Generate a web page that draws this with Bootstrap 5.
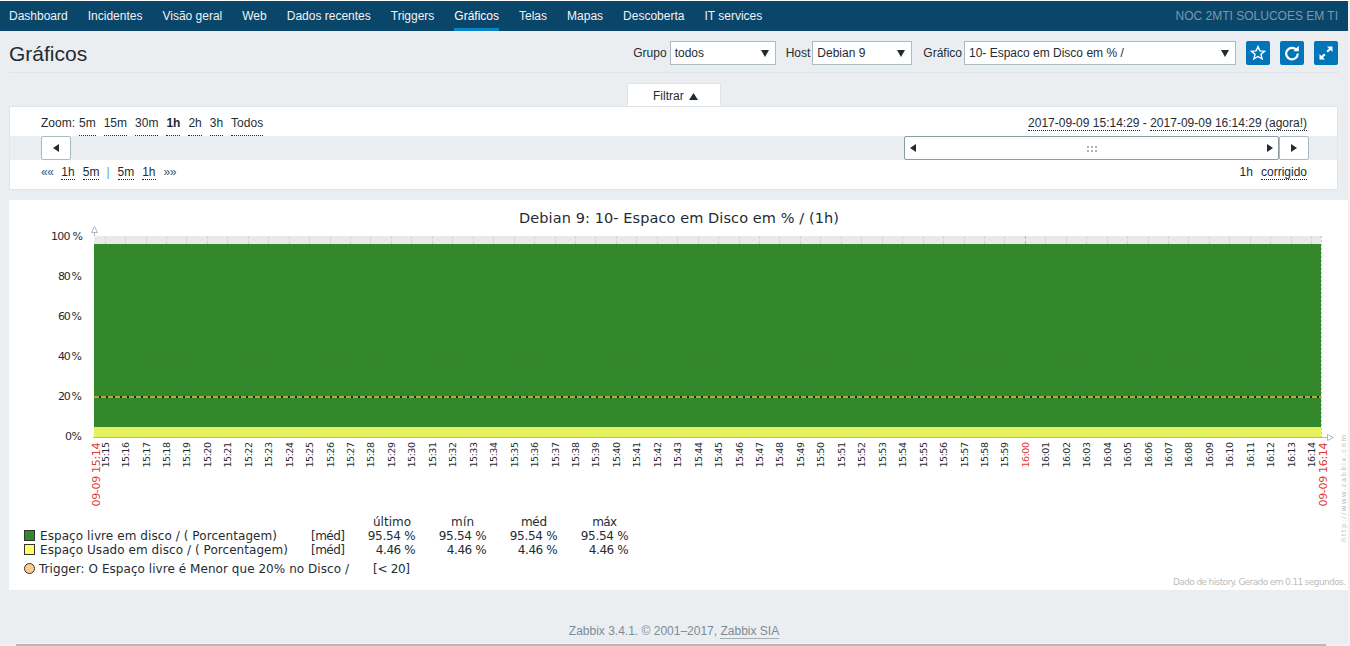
<!DOCTYPE html>
<html lang="pt">
<head>
    <meta charset="UTF-8">
    <title>Gráficos</title>
    <link href="https://cdn.jsdelivr.net/npm/bootstrap@5.3.0/dist/css/bootstrap.min.css" rel="stylesheet">
    <style>
        html, body { height: 646px; overflow: hidden; }
        body { background: #ebeef0; color: #1f2c33; font-family: "Liberation Sans", Arial, sans-serif; font-size: 12px; line-height: 14px; }
        .top-bar { background: #0a466a; height: 31px; border-top: 1px solid #fff; padding-right: 12px; }
        .top-bar .nav-links { padding-left: 9px; gap: 20px; }
        .top-bar a { display: block; color: #f2f2f2; text-decoration: none; padding-top: 8px; height: 30px; }
        .top-bar a.sel { color: #fff; border-bottom: 3px solid #0a84c8; }
        .org-name { color: #7e98a8; padding-top: 8px; }
        .page-head { margin: 0 12px 0 9px; height: 42px; padding-top: 3px; border-bottom: 1px solid #e0e4e7; }
        .page-head h1 { font-size: 21px; line-height: 24px; margin: 2px 0 0; font-weight: 400; font-family: "Liberation Sans", Arial, sans-serif; color: #1f2c33; }
        .pick { height: 24px; font-size: 12px; line-height: 14px; padding: 0 20px 0 4px; border-radius: 0; border: 1px solid #acbbc2; color: #1f2c33; background-size: 16px 12px; background-position: right 2px center; background-image: url("data:image/svg+xml,%3csvg xmlns='http://www.w3.org/2000/svg' viewBox='0 0 16 12'%3e%3cpath fill='%231f2c33' d='M4 3h8l-4 7z'/%3e%3c/svg%3e"); }
        .pick-group { width: 106px; margin: 0 10px 0 3px; }
        .pick-host { width: 100px; margin: 0 11px 0 2px; }
        .pick-graph { width: 272px; margin: 0 10px 0 2px; }
        .btn-row { gap: 10px; }
        .blue-btn { width: 24px; height: 24px; background: #0275b8; border-radius: 2px; border: 0; padding: 0; display: flex; align-items: center; justify-content: center; }
        .filter-tab { width: 94px; height: 23px; background: #fff; margin: 10px 0 0 627px; text-align: center; padding: 5px 0 0 3px; border: 1px solid #e0e4e7; border-bottom: 0; }
        .tab-arrow { margin-left: 2px; }
        .panel-box { background: #fff; border: 1px solid #e0e4e7; margin: 0 12px 0 9px; }
        .filter-box { height: 84px; }
        .zoom-row { height: 29px; padding: 9px 30px 0 31px; }
        .zoom-word { margin-right: -4px; }
        .dot-link { color: #1f2c33; text-decoration: none; border-bottom: 1px dotted #1f2c33; }
        .track { height: 24px; background: #ebeef0; padding: 0 28px 0 31px; }
        .arrow-btn { width: 30px; height: 24px; background: #fff; border: 1px solid #acbbc2; border-radius: 2px; display: flex; align-items: center; justify-content: center; }
        .slide-bar { width: 375px; height: 24px; background: #fff; border: 1px solid #8d9ba3; border-radius: 2px; padding: 0 5px; }
        .move-row { padding: 5px 30px 0 31px; }
        .tri-l, .tri-r { width: 0; height: 0; border-top: 4px solid transparent; border-bottom: 4px solid transparent; display: block; }
        .tri-l { border-right: 6px solid #1f2c33; }
        .tri-r { border-left: 6px solid #1f2c33; }
        .mute { color: #2a5a7d; letter-spacing: -0.5px; }
        .pipe { color: #5d9ed3; margin-left: -1px; }
        .graph-box { background: #fff; margin: 10px 2px 0 9px; height: 390px; }
        .graph-box svg { display: block; overflow: hidden; }
        .graph-box text { font-family: "DejaVu Sans", sans-serif; font-size: 12px; fill: #1f2c33; }
        .graph-box text.head { font-size: 14.5px; }
        .graph-box text.low { font-size: 9.5px; }
        .graph-box text.scale { font-size: 11px; }
        .graph-box text.stamp { font-size: 11px; fill: #e33734; }
        .graph-box text.red { fill: #e33734; }
        .graph-box text.faint { font-size: 9px; fill: #bdbdbd; }
        .graph-box text.url { font-size: 7px; fill: #bdbdbd; }
        .foot { text-align: center; color: #7b8c97; margin-top: 34px; padding-right: 2px; }
        .foot a { color: #7b8c97; text-decoration: none; border-bottom: 1px solid #a5b0b7; }
        .track-side { position: fixed; top: 1px; right: 0; bottom: 0; width: 2px; background: #f1f1f1; }
        .track-low { position: fixed; left: 0; right: 0; bottom: 0; height: 3px; background: #f1f1f1; }
        .thumb-low { position: absolute; left: 16px; right: 24px; bottom: 0; height: 2px; background: #b9b9b9; }
    </style>
</head>
<body>
    <div class="top-bar d-flex justify-content-between">
        <div class="nav-links d-flex">
            <a href="#">Dashboard</a>
            <a href="#">Incidentes</a>
            <a href="#">Visão geral</a>
            <a href="#">Web</a>
            <a href="#">Dados recentes</a>
            <a href="#">Triggers</a>
            <a href="#" class="sel">Gráficos</a>
            <a href="#">Telas</a>
            <a href="#">Mapas</a>
            <a href="#">Descoberta</a>
            <a href="#">IT services</a>
        </div>
        <div class="org-name">NOC 2MTI SOLUCOES EM TI</div>
    </div>

    <div class="page-head d-flex justify-content-between align-items-center">
        <h1>Gráficos</h1>
        <div class="d-flex align-items-center">
            <span>Grupo</span>
            <select class="form-select pick pick-group"><option>todos</option></select>
            <span>Host</span>
            <select class="form-select pick pick-host"><option>Debian 9</option></select>
            <span>Gráfico</span>
            <select class="form-select pick pick-graph"><option>10- Espaco em Disco em % /</option></select>
            <div class="d-flex btn-row">
                <button class="blue-btn" title="favorito">
                    <svg width="16" height="16" viewBox="0 0 16 16"><path d="M8 1.6l1.9 4.3 4.6.4-3.5 3 1.1 4.6L8 11.5l-4.1 2.4L5 9.3l-3.5-3 4.6-.4z" fill="none" stroke="#fff" stroke-width="1.4"/></svg>
                </button>
                <button class="blue-btn" title="atualizar">
                    <svg width="16" height="16" viewBox="0 0 16 16"><path d="M12.2 4.6A5.8 5.8 0 1 0 13.8 8.6" fill="none" stroke="#fff" stroke-width="2.2"/><path d="M9.4 6.2h5.4V.8z" fill="#fff"/></svg>
                </button>
                <button class="blue-btn" title="tela cheia">
                    <svg width="16" height="16" viewBox="0 0 16 16"><path d="M9 1.5h5.5V7l-2-2-2.6 2.6-1.5-1.5L11 3.5zM7 14.5H1.5V9l2 2 2.6-2.6 1.5 1.5L5 12.5z" fill="#fff"/></svg>
                </button>
            </div>
        </div>
    </div>

    <div class="filter-tab">Filtrar <svg width="9" height="7" viewBox="0 0 9 7" class="tab-arrow"><path d="M4.5 0L9 7H0z" fill="#1f2c33"/></svg></div>

    <div class="panel-box filter-box">
        <div class="zoom-row d-flex justify-content-between">
            <div class="d-flex gap-2">
                <span class="zoom-word">Zoom:</span>
                <a class="dot-link" href="#">5m</a>
                <a class="dot-link" href="#">15m</a>
                <a class="dot-link" href="#">30m</a>
                <b class="dot-link">1h</b>
                <a class="dot-link" href="#">2h</a>
                <a class="dot-link" href="#">3h</a>
                <a class="dot-link" href="#">Todos</a>
            </div>
            <div>
                <a class="dot-link" href="#">2017-09-09 15:14:29</a> - <a class="dot-link" href="#">2017-09-09 16:14:29</a> <span class="dot-link">(agora!)</span>
            </div>
        </div>
        <div class="track d-flex justify-content-between">
            <div class="arrow-btn"><span class="tri-l"></span></div>
            <div class="d-flex">
                <div class="slide-bar d-flex justify-content-between align-items-center">
                    <span class="tri-l"></span>
                    <svg width="11" height="7" viewBox="0 0 11 7"><path d="M1 1h2v2H1zM5 1h2v2H5zM9 1h2v2H9zM1 5h2v2H1zM5 5h2v2H5zM9 5h2v2H9z" fill="#a9b5bc"/></svg>
                    <span class="tri-r"></span>
                </div>
                <div class="arrow-btn"><span class="tri-r"></span></div>
            </div>
        </div>
        <div class="move-row d-flex justify-content-between">
            <div class="d-flex gap-2">
                <span class="mute">««</span>
                <a class="dot-link" href="#">1h</a>
                <a class="dot-link" href="#">5m</a>
                <span class="pipe">|</span>
                <a class="dot-link" href="#">5m</a>
                <a class="dot-link" href="#">1h</a>
                <span class="mute">»»</span>
            </div>
            <div class="d-flex gap-2">
                <span>1h</span>
                <a class="dot-link" href="#">corrigido</a>
            </div>
        </div>
    </div>

    <div class="graph-box">
        <svg id="grafico" width="1339" height="390" viewBox="9 200 1339 390"></svg>
    </div>

    <div class="foot">Zabbix 3.4.1. © 2001–2017, <a href="#">Zabbix SIA</a></div>
    <div class="track-side"></div>
    <div class="track-low"><div class="thumb-low"></div></div>

    <script>
        function texto(classe, x, y, largura, ancora, conteudo) {
            return '<text class="' + classe + '" x="' + x + '" y="' + y + '"' +
                (largura ? ' textLength="' + largura + '"' : '') +
                (ancora ? ' text-anchor="' + ancora + '"' : '') + '>' + conteudo + '</text>';
        }

        function montarGrafico() {
            var x0 = 94, x1 = 1321, yTop = 236;
            var passo = 1227 / 60, primeiro = 104.6;
            var s = '';
            var i, x, y;

            s += texto('head', 679, 223, 320, 'middle', 'Debian 9: 10- Espaco em Disco em % / (1h)');

            // eixos, ficam por baixo das areas
            s += '<line x1="94.5" x2="94.5" y1="229" y2="437" stroke="#acbbc2"/>';
            s += '<path d="M91.5 232.5l3-6 3 6z" fill="#fff" stroke="#acbbc2"/>';
            s += '<line x1="93" x2="1328" y1="437.5" y2="437.5" stroke="#acbbc2"/>';
            s += '<path d="M1327.5 434.5l6 3-6 3z" fill="#fff" stroke="#acbbc2"/>';
            s += '<line x1="1321.5" x2="1321.5" y1="236" y2="437" stroke="#c4c4c4" stroke-dasharray="2 2"/>';

            s += '<rect x="' + x0 + '" y="' + yTop + '" width="' + (x1 - x0) + '" height="8" fill="#e9e9e9"/>';
            s += '<rect x="' + x0 + '" y="244" width="' + (x1 - x0) + '" height="183" fill="#33882b"/>';
            s += '<rect x="' + x0 + '" y="427" width="' + (x1 - x0) + '" height="10" fill="#e5f25e"/>';

            // grade
            for (i = 0; i < 60; i++) {
                x = Math.round(primeiro + i * passo) + 0.5;
                var forte = (i === 45);
                s += '<line x1="' + x + '" x2="' + x + '" y1="' + yTop + '" y2="244" stroke="' + (forte ? '#a3b5c2' : '#ced6d2') + '" stroke-dasharray="3 2"/>';
                s += '<line x1="' + x + '" x2="' + x + '" y1="244" y2="427" stroke="' + (forte ? '#2f7f3a' : '#318329') + '" stroke-dasharray="2 2"/>';
            }
            var larguras = [17, 24, 24, 24, 24, 32];
            for (i = 0; i <= 5; i++) {
                y = 436.5 - i * 40.1;
                if (i > 0 && i < 5) {
                    s += '<line x1="' + x0 + '" x2="' + x1 + '" y1="' + y + '" y2="' + y + '" stroke="#318329" stroke-dasharray="2 2"/>';
                }
                s += texto('scale', i === 5 ? 83 : 82, y + 3.5, larguras[i], 'end', (i * 20) + ' %');
            }
            s += '<line x1="' + x0 + '" x2="' + x1 + '" y1="397" y2="397" stroke="#10301a" stroke-width="2"/>';
            s += '<line x1="' + x0 + '" x2="' + x1 + '" y1="397" y2="397" stroke="#b3a93a" stroke-width="2" stroke-dasharray="5 2"/>';

            // rotulos de tempo
            for (i = 0; i < 60; i++) {
                var total = 15 * 60 + 15 + i;
                var h = Math.floor(total / 60), m = total % 60;
                x = primeiro + i * passo + 4;
                s += '<text class="low' + (i === 45 ? ' red' : '') + '" textLength="25.5" transform="translate(' + x + ' 467.5) rotate(-90)">' + h + ':' + (m < 10 ? '0' + m : m) + '</text>';
            }
            s += '<text class="stamp" textLength="64" transform="translate(99.5 506.5) rotate(-90)">09-09 15:14</text>';
            s += '<text class="stamp" textLength="64" transform="translate(1326.5 506.5) rotate(-90)">09-09 16:14</text>';
            s += '<text class="url" textLength="107" transform="translate(1346 542) rotate(-90)">http://www.zabbix.com</text>';

            // legenda
            var cols = [415.7, 486.7, 557.7, 628.7];
            var heads = [['último', 392, 38], ['mín', 462.5, 23], ['méd', 534, 26], ['máx', 604.7, 25]];
            heads.forEach(function (t) {
                s += texto('', t[1], 525.5, t[2], 'middle', t[0]);
            });
            var linhas = [
                ['Espaço livre em disco / ( Porcentagem)', 237, '95.54 %', 48, '#33882b', 540],
                ['Espaço Usado em disco / ( Porcentagem)', 248, '4.46 %', 40, '#ffff66', 554]
            ];
            linhas.forEach(function (l) {
                s += '<rect x="24.5" y="' + (l[5] - 9.5) + '" width="10" height="10" fill="' + l[4] + '" stroke="#333"/>';
                s += texto('', 40, l[5], l[1], '', l[0]);
                s += texto('', 345, l[5], 34, 'end', '[méd]');
                cols.forEach(function (c) {
                    s += texto('', c, l[5], l[3], 'end', l[2]);
                });
            });
            s += '<circle cx="29.5" cy="568.5" r="5" fill="#ffcc88" stroke="#333"/>';
            s += texto('', 39, 573, 310, '', 'Trigger: O Espaço livre é Menor que 20% no Disco /');
            s += texto('', 410, 573, 37, 'end', '[&lt; 20]');
            s += texto('faint', 1346, 585, 173, 'end', 'Dado de history. Gerado em 0.11 segundos.');

            document.getElementById('grafico').innerHTML = s;
        }
        window.onload = montarGrafico;
    </script>
    <script src="https://cdn.jsdelivr.net/npm/bootstrap@5.3.0/dist/js/bootstrap.bundle.min.js"></script>
</body>
</html>
